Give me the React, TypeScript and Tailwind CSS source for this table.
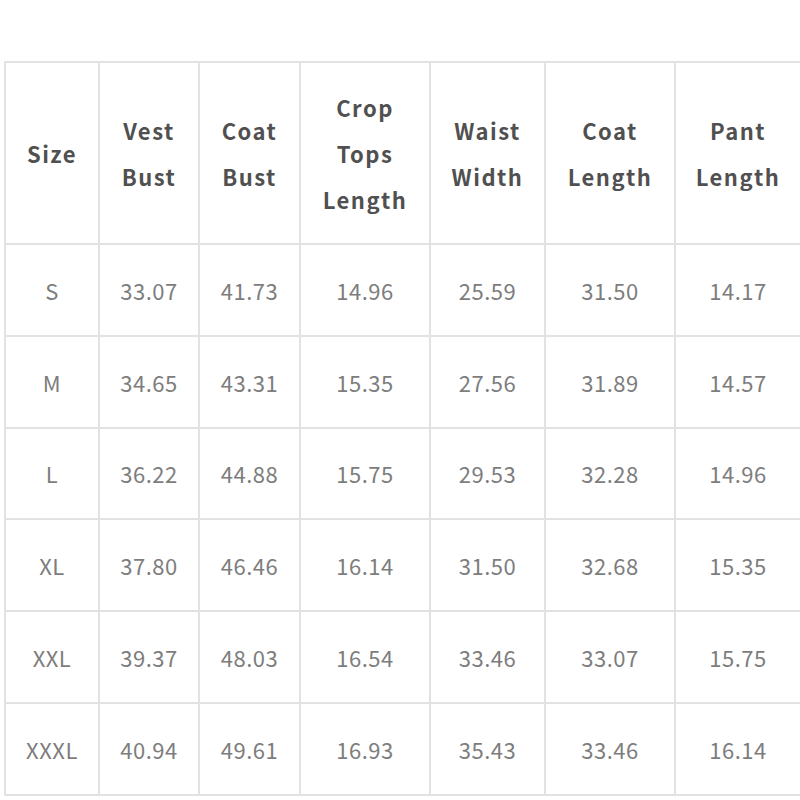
const headers = [
  ["Size"],
  ["Vest", "Bust"],
  ["Coat", "Bust"],
  ["Crop", "Tops", "Length"],
  ["Waist", "Width"],
  ["Coat", "Length"],
  ["Pant", "Length"],
];

const rows = [
  ["S", "33.07", "41.73", "14.96", "25.59", "31.50", "14.17"],
  ["M", "34.65", "43.31", "15.35", "27.56", "31.89", "14.57"],
  ["L", "36.22", "44.88", "15.75", "29.53", "32.28", "14.96"],
  ["XL", "37.80", "46.46", "16.14", "31.50", "32.68", "15.35"],
  ["XXL", "39.37", "48.03", "16.54", "33.46", "33.07", "15.75"],
  ["XXXL", "40.94", "49.61", "16.93", "35.43", "33.46", "16.14"],
];

export default function App() {
  return (
    <div
      className="h-[800px] w-[800px] overflow-hidden bg-white pl-[4px] pt-[61px]"
      style={{ fontFamily: '"Noto Sans CJK SC", "Noto Sans", sans-serif' }}
    >
      <div className="grid w-max grid-cols-[94px_100px_101px_130px_115px_130px_126px] grid-rows-[182px_92px_92px_91px_92px_92px_92px] border-l-2 border-t-2 border-[#e2e2e2]">
        {headers.map((lines, i) => (
          <div
            key={i}
            className="flex flex-col items-center justify-center border-b-2 border-r-2 border-[#e2e2e2] text-[22px] font-bold leading-[46px] tracking-[1.5px] text-[#505050]"
          >
            {lines.map((line) => (
              <span key={line}>{line}</span>
            ))}
          </div>
        ))}
        {rows.map((row) =>
          row.map((cell, j) => (
            <div
              key={row[0] + j}
              className="flex items-center justify-center border-b-2 border-r-2 border-[#e2e2e2] text-[22px] font-normal tracking-[0.5px] text-[#7d7d7d]"
            >
              {cell}
            </div>
          ))
        )}
      </div>
    </div>
  );
}
